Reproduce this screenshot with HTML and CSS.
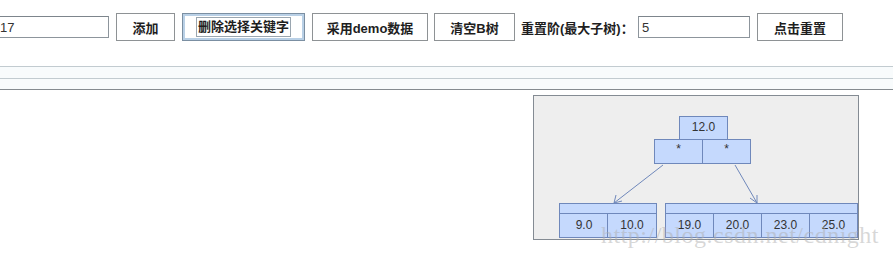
FILE: index.html
```html
<!DOCTYPE html>
<html lang="zh-CN">
<head>
  <meta charset="UTF-8" />
  <meta name="viewport" content="width=device-width, initial-scale=1.0"/>
  <title>B树演示</title>
  <link rel="stylesheet" href="styles.css">
</head>
<body>

  <div class="toolbar">
    <input type="text" class="field field-key" value="17">
    <button class="btn btn-add">添加</button>
    <button class="btn btn-del focused"><span class="focus-ring">删除选择关键字</span></button>
    <button class="btn btn-demo">采用demo数据</button>
    <button class="btn btn-clear">清空B树</button>
    <label class="order-label">重置阶(最大子树)：</label>
    <input type="text" class="field field-order" value="5">
    <button class="btn btn-reset">点击重置</button>
  </div>

  <div class="rules">
    <div class="rule band"></div>
    <div class="rule band"></div>
    <div class="rule dark"></div>
  </div>

  <div class="canvas">
    <svg width="324" height="143" viewBox="0 0 324 143">
      <g class="node">
        <rect x="145.5" y="20.5" width="48" height="23"/>
        <rect x="120.5" y="43.5" width="48" height="24"/>
        <rect x="168.5" y="43.5" width="48" height="24"/>
      </g>
      <text x="169.5" y="35" class="key">12.0</text>
      <text x="144.5" y="57" class="key">*</text>
      <text x="192.5" y="57" class="key">*</text>

      <g class="edge">
        <line x1="129" y1="69" x2="80" y2="107"/>
        <polyline points="82,99 80,107 88,105"/>
        <line x1="201" y1="69" x2="223" y2="107"/>
        <polyline points="216,102 223,107 223,99"/>
      </g>

      <g class="node">
        <rect x="25.5" y="107.5" width="97" height="10"/>
        <rect x="25.5" y="117.5" width="48" height="24"/>
        <rect x="73.5" y="117.5" width="49" height="24"/>

        <rect x="131.5" y="107.5" width="192" height="10"/>
        <rect x="131.5" y="117.5" width="48" height="24"/>
        <rect x="179.5" y="117.5" width="48" height="24"/>
        <rect x="227.5" y="117.5" width="48" height="24"/>
        <rect x="275.5" y="117.5" width="48" height="24"/>
      </g>
      <text x="50" y="133" class="key">9.0</text>
      <text x="98" y="133" class="key">10.0</text>
      <text x="155.5" y="133" class="key">19.0</text>
      <text x="203.5" y="133" class="key">20.0</text>
      <text x="251.5" y="133" class="key">23.0</text>
      <text x="299.5" y="133" class="key">25.0</text>
    </svg>
  </div>

  <div class="watermark">http://blog.csdn.net/cdnight</div>

</body>
</html>
```

FILE: styles.css
```css
* {
  box-sizing: border-box;
}

body {
  margin: 0;
  position: relative;
  width: 893px;
  height: 258px;
  overflow: hidden;
  background: #fff;
  font-family: "Liberation Sans", "Noto Sans CJK SC", sans-serif;
}

.toolbar {
  display: flex;
  align-items: center;
  gap: 7px;
  height: 28px;
  margin-top: 13px;
}

.field {
  height: 22px;
  border: 1px solid #8d959c;
  border-top-color: #7d858c;
  padding: 0 0 0 3px;
  font-family: "Liberation Sans", sans-serif;
  font-size: 13px;
  color: #333;
  background: #fff;
  outline: none;
}
.field-key {
  width: 109px;
  border-left: none;
  padding-left: 0;
}
.field-order { width: 112px; }

.btn {
  height: 28px;
  padding: 0;
  border: 1px solid #8e9295;
  background: #fff;
  font-family: "Liberation Sans", "Noto Sans CJK SC", sans-serif;
  font-weight: bold;
  font-size: 13px;
  color: #1e1e1e;
  display: flex;
  align-items: center;
  justify-content: center;
}
.btn-add { width: 59px; }
.btn-del { width: 123px; }
.btn-demo { width: 116px; }
.btn-clear { width: 81px; margin-left: -1px; }
.btn-reset { width: 86px; }

.focused {
  border-color: #7b8fa2;
  box-shadow: inset 0 0 0 2px #b9d0e6;
}
.focus-ring {
  border: 1px solid #9aa6b0;
  padding: 1px 1px;
  line-height: 16px;
}

.order-label {
  width: 110px;
  margin-left: -1px;
  font-weight: bold;
  font-size: 13px;
  color: #1e1e1e;
  white-space: nowrap;
}

.rules {
  margin-top: 25px;
}
.rule {
  border-top: 1px solid #c2cbd0;
}
.rule.band {
  height: 12px;
  background: #f8fbfc;
}
.rule.band + .rule.band {
  height: 11px;
}
.rule.dark {
  border-top-color: #858b90;
  height: 1px;
}

.canvas {
  width: 326px;
  height: 145px;
  margin-top: 5px;
  margin-left: 533px;
  border: 1px solid #848b93;
  background: #eeeeee;
}
.canvas svg {
  display: block;
  overflow: visible;
}

.node rect {
  fill: #c5d9fd;
  stroke: #6f88bb;
  stroke-width: 1;
}
.edge line,
.edge polyline {
  fill: none;
  stroke: #6f88bb;
  stroke-width: 1;
}
.key {
  font-family: "Liberation Sans", sans-serif;
  font-size: 12px;
  fill: #333;
  text-anchor: middle;
}

.watermark {
  position: absolute;
  left: 601px;
  top: 222px;
  font-family: "Liberation Serif", serif;
  font-size: 24px;
  letter-spacing: 0.5px;
  color: rgba(175, 175, 175, 0.5);
  white-space: nowrap;
}
```
